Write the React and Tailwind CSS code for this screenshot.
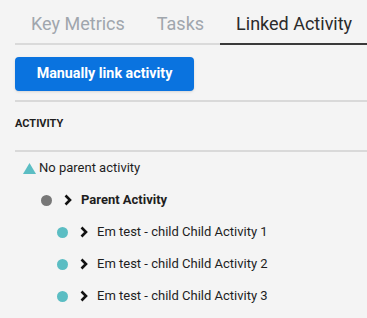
import React from 'react'

function Chevron() {
  return (
    <svg width="8" height="12" viewBox="0 0 8 12" className="shrink-0">
      <polyline points="1.5,1.5 6,6 1.5,10.5" fill="none" stroke="#111" strokeWidth="2.6" strokeLinejoin="miter" />
    </svg>
  )
}

function Row({ indent, dot, bold, children }) {
  return (
    <div className={`flex h-8 items-center ${indent}`}>
      <span className={`h-[11px] w-[11px] shrink-0 rounded-full ${dot}`} />
      <span className="ml-[12px] flex">
        <Chevron />
      </span>
      <span className={`ml-[9px] whitespace-nowrap text-[13px] text-[#1e1e1e] ${bold ? 'font-bold' : ''}`}>{children}</span>
    </div>
  )
}

export default function App() {
  const tabs = ['Key Metrics', 'Tasks', 'Linked Activity']
  return (
    <div className="h-[318px] w-full overflow-hidden bg-[#f4f4f4]" style={{ fontFamily: 'Roboto, "Liberation Sans", sans-serif' }}>
      {/* Tabs */}
      <div className="ml-[15px] flex border-b-2 border-[#dadada] pt-3">
        {tabs.map((t, i) => (
          <div
            key={t}
            className={`-mb-[2px] shrink-0 whitespace-nowrap border-b-2 px-4 pb-[7px] text-[18px] leading-6 ${
              i === 2 ? 'border-[#3a3a3a] text-[#2b2b2b]' : 'border-transparent text-[#a0a6ad]'
            }`}
          >
            {t}
          </div>
        ))}
      </div>

      {/* Button */}
      <div className="ml-[15px] mt-3">
        <button className="flex h-[34px] w-[179px] items-center justify-center rounded bg-[#0a73df] text-[14.3px] font-bold text-white shadow-sm">
          Manually link activity
        </button>
      </div>

      <div className="ml-[15px] mt-[9px] h-[2px] bg-[#d9d9d9]" />

      <div className="ml-[15px] h-[48px] pt-[14px] text-[11px] font-bold leading-4 text-[#1e1e1e]">ACTIVITY</div>

      <div className="ml-[15px] h-[2px] bg-[#d9d9d9]" />

      {/* Tree */}
      <div className="flex h-8 items-center pl-[23px]">
        <svg width="13" height="11" viewBox="0 0 13 11" className="shrink-0">
          <polygon points="6.5,0 13,11 0,11" fill="#5bbdc3" />
        </svg>
        <span className="ml-[3px] text-[13px] text-[#1e1e1e]">No parent activity</span>
      </div>
      <Row indent="pl-[41px]" dot="bg-[#777777]" bold>
        Parent Activity
      </Row>
      <Row indent="pl-[57px]" dot="bg-[#5bbdc3]">
        Em test - child Child Activity 1
      </Row>
      <Row indent="pl-[57px]" dot="bg-[#5bbdc3]">
        Em test - child Child Activity 2
      </Row>
      <Row indent="pl-[57px]" dot="bg-[#5bbdc3]">
        Em test - child Child Activity 3
      </Row>
    </div>
  )
}
